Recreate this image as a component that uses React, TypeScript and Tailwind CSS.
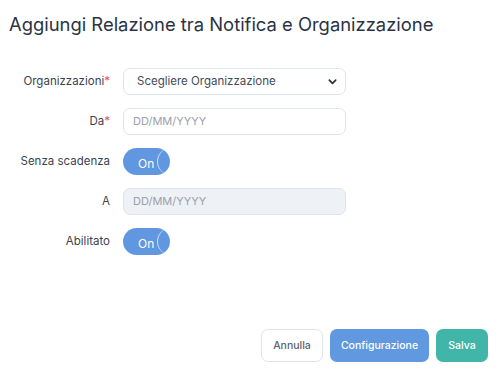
import React from 'react';

function Toggle() {
  return (
    <div className="relative flex h-[27px] w-[47px] items-center overflow-hidden rounded-full bg-[#6197e0]">
      <span className="ml-[15px] mt-[5px] text-[12px] text-white">On</span>
      <span className="absolute right-[-1px] top-0 h-[27px] w-[14px] rounded-l-full border-l border-white/70" />
    </div>
  );
}

function Row({ label, required, children }: { label: string; required?: boolean; children: React.ReactNode }) {
  return (
    <div className="flex h-[27px] items-center">
      <div className="w-[110px] text-right text-[11.5px] text-[#3b4350]">
        {label}
        {required && <span className="text-[#e5536f]">*</span>}
      </div>
      <div className="ml-[13px] w-[223px]">{children}</div>
    </div>
  );
}

export default function App() {
  return (
    <div className="h-[378px] w-[501px] bg-white font-['Inter',sans-serif]">
      <h1 className="pl-[9px] pt-[12px] text-[18.4px] leading-6 text-[#2a3444]">
        Aggiungi Relazione tra Notifica e Organizzazione
      </h1>

      <div className="mt-[32px] flex flex-col gap-[13px]">
        <Row label="Organizzazioni" required>
          <div className="flex h-[27px] items-center justify-between rounded-[7px] border border-[#dfe3ea] pl-[13px] pr-[8px] text-[11.5px] text-[#434b57]">
            <span>Scegliere Organizzazione</span>
            <svg width="9" height="9" viewBox="0 0 10 10" fill="none">
              <path d="M1.5 3.5 5 7l3.5-3.5" stroke="#333" strokeWidth="2" strokeLinecap="round" strokeLinejoin="round" />
            </svg>
          </div>
        </Row>
        <Row label="Da" required>
          <div className="flex h-[27px] items-center rounded-[7px] border border-[#dfe3ea] pl-[9px] text-[11px] text-[#9aa1ab]">
            DD/MM/YYYY
          </div>
        </Row>
        <Row label="Senza scadenza">
          <Toggle />
        </Row>
        <Row label="A">
          <div className="flex h-[27px] items-center rounded-[7px] border border-[#dfe3ea] bg-[#eef1f5] pl-[9px] text-[11px] text-[#9aa1ab]">
            DD/MM/YYYY
          </div>
        </Row>
        <Row label="Abilitato">
          <Toggle />
        </Row>
      </div>

      <div className="mt-[74px] flex justify-end gap-[7px] pr-[13px]">
        <button className="h-[33px] w-[62px] rounded-[7px] border border-[#dfe3ea] bg-white text-[10.5px] font-medium text-[#5b6370]">
          Annulla
        </button>
        <button className="h-[33px] w-[99px] rounded-[7px] bg-[#6199e1] text-[10.5px] font-medium text-white">
          Configurazione
        </button>
        <button className="h-[33px] w-[52px] rounded-[7px] bg-[#41b5a8] text-[10.5px] font-medium text-white">
          Salva
        </button>
      </div>
    </div>
  );
}
